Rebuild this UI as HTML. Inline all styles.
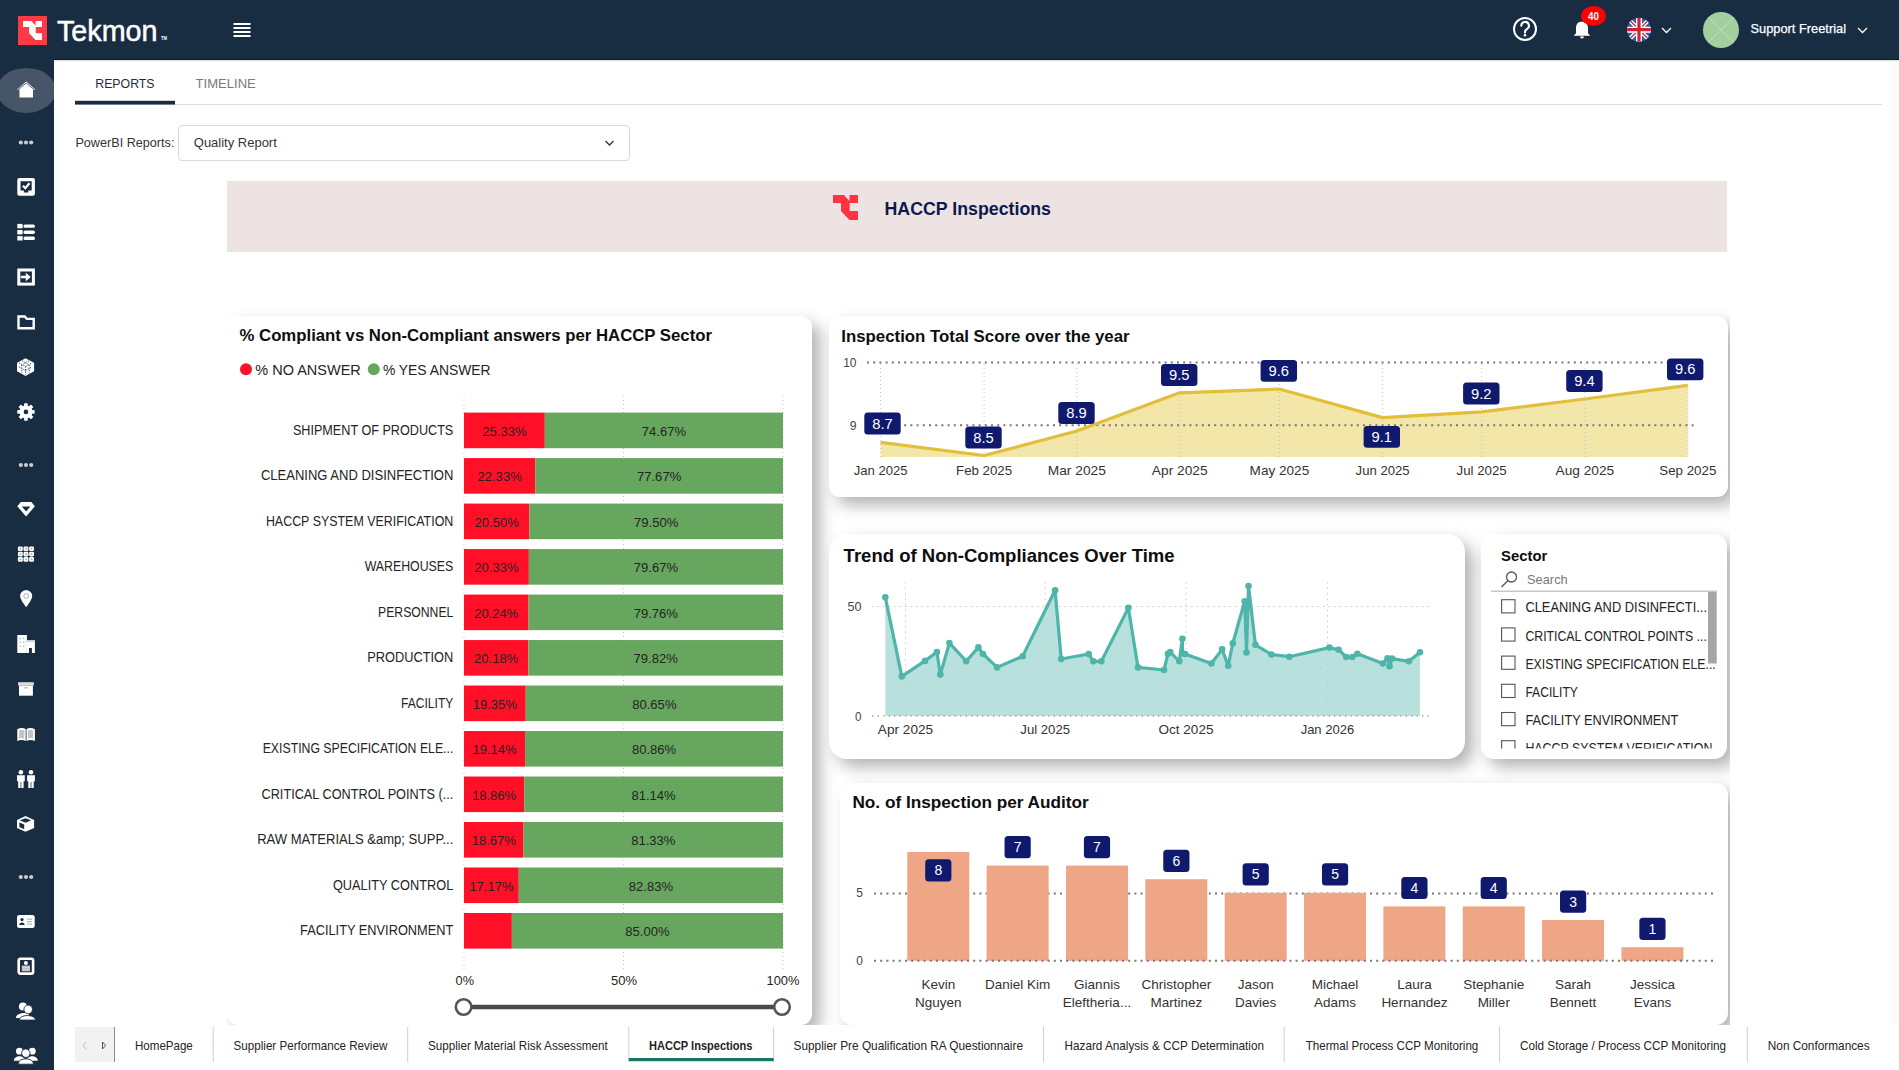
<!DOCTYPE html>
<html><head><meta charset="utf-8"><title>Tekmon - HACCP Inspections</title>
<style>
*{box-sizing:border-box}
html,body{margin:0;padding:0;width:1899px;height:1070px;overflow:hidden;background:#fff;font-family:"Liberation Sans",sans-serif}
.abs{position:absolute}
#header{position:absolute;left:0;top:0;width:1899px;height:60px;background:#182c42}
#sidebar{position:absolute;left:0;top:60px;width:54px;height:1010px;background:#182c42}
.card{position:absolute;background:#fff;border-radius:11px;box-shadow:8px 8px 16px rgba(0,0,0,0.3)}
svg text{font-family:"Liberation Sans",sans-serif}
</style></head><body>

<div id="header"></div><div id="sidebar"></div>
<div class="abs" style="left:54px;top:59px;width:1845px;height:1px;background:#0c1d2f"></div>
<div class="abs" style="left:54px;top:60px;width:1845px;height:2px;background:linear-gradient(#d8d8d8,#fff)"></div>
<div class="abs" style="left:1891px;top:62px;width:8px;height:1008px;background:#fbfbfb"></div>
<div class="abs" style="left:227px;top:181px;width:1500px;height:71px;background:#ede3e3"></div>
<div class="abs" style="left:178px;top:125px;width:452px;height:36px;border:1px solid #d9d9d9;border-radius:4px;background:#fff"></div>
<div class="card" style="left:227px;top:316px;width:585px;height:709px;border-radius:11px"></div>
<div class="card" style="left:829px;top:316px;width:899px;height:181px;border-radius:11px"></div>
<div class="card" style="left:829px;top:534px;width:636px;height:225px;border-radius:18px"></div>
<div class="card" style="left:1481px;top:534px;width:246px;height:225px;border-radius:13px"></div>
<div class="card" style="left:840px;top:783px;width:888px;height:242px;border-radius:12px"></div>
<div class="abs" style="left:54px;top:170px;width:173px;height:855px;background:#fff"></div>
<div class="abs" style="left:1730px;top:170px;width:161px;height:855px;background:#fff"></div>
<div class="abs" style="left:54px;top:1025px;width:1845px;height:45px;background:#fff"></div>
<svg class="abs" style="left:0;top:0" width="1899" height="1070" viewBox="0 0 1899 1070">
<rect x="18" y="16" width="29" height="29" fill="#ff3a47"/>
<path d="M0,0 H11 L16.5,6 V0 H25 V8 H16.7 V16 H25 V25 H16.5 L8,16 V8 H0 Z" fill="#fff" transform="translate(23,21) scale(0.76)"/>
<text x="57" y="40.5" font-size="29" font-weight="normal" fill="#fff" text-anchor="start" textLength="100.5" lengthAdjust="spacingAndGlyphs" stroke="#fff" stroke-width="0.5">Tekmon</text>
<text x="161" y="40" font-size="5" font-weight="bold" fill="#fff" text-anchor="start" textLength="6" lengthAdjust="spacingAndGlyphs" >TM</text>
<rect x="233.5" y="23" width="17" height="2" fill="#fff"/>
<rect x="233.5" y="27" width="17" height="2" fill="#fff"/>
<rect x="233.5" y="31" width="17" height="2" fill="#fff"/>
<rect x="233.5" y="35" width="17" height="2" fill="#fff"/>
<circle cx="1525" cy="29" r="11" fill="none" stroke="#fff" stroke-width="2"/>
<path d="M1521.3,25.8 a3.8,3.8 0 1 1 5.6,3.3 c-1.2,0.7 -1.9,1.4 -1.9,2.8 v0.6" fill="none" stroke="#fff" stroke-width="2.1" stroke-linecap="round"/>
<circle cx="1525" cy="35.2" r="1.3" fill="#fff"/>
<path d="M1582,21.5 c-3.8,0 -6,2.8 -6,6.5 v5.2 l-2.3,2.6 h16.6 l-2.3,-2.6 v-5.2 c0,-3.7 -2.2,-6.5 -6,-6.5z" fill="#fff"/>
<path d="M1580,36.5 a2,2 0 0 0 4,0z" fill="#fff"/>
<ellipse cx="1593.5" cy="16" rx="12.5" ry="10" fill="#f00"/>
<text x="1593.5" y="20" font-size="11" font-weight="bold" fill="#fff" text-anchor="middle" textLength="11" lengthAdjust="spacingAndGlyphs" >40</text>
<defs><clipPath id="flagc"><circle cx="1639" cy="29.7" r="12"/></clipPath></defs>
<g clip-path="url(#flagc)"><rect x="1627" y="17.7" width="24" height="24" fill="#2c5fb4"/><path d="M1627,17.7 L1651,41.7 M1651,17.7 L1627,41.7" stroke="#fff" stroke-width="4"/><path d="M1627,17.7 L1651,41.7 M1651,17.7 L1627,41.7" stroke="#d4202f" stroke-width="1.3"/><path d="M1639,17.7 V41.7 M1627,29.7 H1651" stroke="#fff" stroke-width="6"/><path d="M1639,17.7 V41.7 M1627,29.7 H1651" stroke="#d4202f" stroke-width="3.2"/></g>
<path d="M1662,28 l4.5,4.5 l4.5,-4.5" fill="none" stroke="#fff" stroke-width="1.3"/>
<circle cx="1721" cy="30" r="18" fill="#a2cf9e"/>
<path d="M1708.3,17.3 L1733.7,42.7 M1733.7,17.3 L1708.3,42.7" stroke="#c8e3c5" stroke-width="0.8"/>
<text x="1750.5" y="33" font-size="13" font-weight="normal" fill="#fff" text-anchor="start" textLength="95.5" lengthAdjust="spacingAndGlyphs" stroke="#fff" stroke-width="0.25">Support Freetrial</text>
<path d="M1858,28 l4.5,4.5 l4.5,-4.5" fill="none" stroke="#fff" stroke-width="1.3"/>
<defs><clipPath id="sbc"><rect x="0" y="60" width="54" height="1010"/></clipPath></defs><ellipse cx="26.3" cy="90.4" rx="29.5" ry="22.5" fill="#465567" clip-path="url(#sbc)"/>
<g transform="translate(17,81.5)"><path d="M9.25,0 L18.5,8.2 H16 V15.9 H2.5 V8.2 H0 Z" fill="#fff"/><path d="M1.2,8.3 L9.25,1.6 L17.3,8.3" fill="none" stroke="#465567" stroke-width="0.9"/></g>
<circle cx="20.8" cy="142.5" r="2.1" fill="#c5ccd4"/><circle cx="26" cy="142.5" r="2.1" fill="#c5ccd4"/><circle cx="31.2" cy="142.5" r="2.1" fill="#c5ccd4"/>
<g transform="translate(17.3,178.1)"><rect x="0" y="0" width="17.6" height="17.7" rx="2" fill="#fff"/><path d="M3.2,3.2 H14.4 V12.3 H11 V14.5 H6.6 V12.3 H3.2 Z" fill="#182c42"/><path d="M5.6,7.6 L8,10 L12.2,5.2" fill="none" stroke="#fff" stroke-width="2.2"/></g>
<g transform="translate(17.3,223.9)"><rect x="0" y="0" width="5.3" height="4.4" fill="#fff"/><rect x="6.2" y="0.5" width="11.4" height="3.4" rx="1.6" fill="#fff"/><rect x="0" y="6.1" width="5.3" height="4.4" fill="#fff"/><rect x="6.2" y="6.6" width="11.4" height="3.4" rx="1.6" fill="#fff"/><rect x="0" y="12.2" width="5.3" height="4.4" fill="#fff"/><rect x="6.2" y="12.7" width="11.4" height="3.4" rx="1.6" fill="#fff"/></g>
<g transform="translate(17.3,268.5)"><rect x="1.5" y="1.5" width="14.6" height="14.1" fill="none" stroke="#fff" stroke-width="3"/><path d="M3.5,7.3 H8.5 V4.3 L13.5,8.55 L8.5,12.8 V9.8 H3.5 Z" fill="#fff"/></g>
<g transform="translate(17.3,315.3)"><path d="M1.2,1.2 H7.5 L9.5,3.6 H16.4 V13 H1.2 Z" fill="none" stroke="#fff" stroke-width="2.4" stroke-linejoin="miter"/></g>
<g transform="translate(17,358.3)"><path d="M8.55,0 L16.6,4.3 Q17.1,4.6 17.1,5.2 V12.4 Q17.1,13 16.6,13.3 L8.55,17.6 L0.5,13.3 Q0,13 0,12.4 V5.2 Q0,4.6 0.5,4.3 Z" fill="#fff"/><g fill="none" stroke="#182c42" stroke-width="0.9" stroke-dasharray="1.2,1.3"><path d="M2,4.6 L8.55,8.2 L15.1,4.6 M8.55,8.2 V16 M5.2,2.5 L11.8,6.3 M11.9,2.5 L5.3,6.3 M2,8.6 L8.55,12.2 L15.1,8.6 M4.8,6.6 V14.5 M12.3,6.6 V14.5"/></g></g>
<g transform="translate(17,403.2)"><polygon points="15.06,6.81 17.69,7.02 17.69,10.38 15.06,10.59 14.61,11.69 16.32,13.69 13.94,16.07 11.94,14.36 10.84,14.81 10.63,17.44 7.27,17.44 7.06,14.81 5.96,14.36 3.96,16.07 1.58,13.69 3.29,11.69 2.84,10.59 0.21,10.38 0.21,7.02 2.84,6.81 3.29,5.71 1.58,3.71 3.96,1.33 5.96,3.04 7.06,2.59 7.27,-0.04 10.63,-0.04 10.84,2.59 11.94,3.04 13.94,1.33 16.32,3.71 14.61,5.71" fill="#fff"/><circle cx="8.95" cy="8.7" r="6.3" fill="#fff"/><circle cx="8.95" cy="8.7" r="2.3" fill="#182c42"/></g>
<circle cx="20.8" cy="465" r="2.1" fill="#c5ccd4"/><circle cx="26" cy="465" r="2.1" fill="#c5ccd4"/><circle cx="31.2" cy="465" r="2.1" fill="#c5ccd4"/>
<g transform="translate(17.3,502)"><path d="M3.6,0 H14 L17.6,4.3 L8.8,14.5 L0,4.3 Z" fill="#fff"/><path d="M4.6,4.6 H13 L8.8,9.6 Z" fill="#182c42"/></g>
<g transform="translate(17.9,546.4)"><rect x="0" y="0" width="4.9" height="4.7" rx="1.3" fill="#fff"/><rect x="1.6" y="1.5" width="1.7" height="1.7" fill="#9fb0b5"/><rect x="0" y="5.3" width="4.9" height="4.7" rx="1.3" fill="#fff"/><rect x="1.6" y="6.8" width="1.7" height="1.7" fill="#9fb0b5"/><rect x="0" y="10.6" width="4.9" height="4.7" rx="1.3" fill="#fff"/><rect x="1.6" y="12.1" width="1.7" height="1.7" fill="#9fb0b5"/><rect x="5.6" y="0" width="4.9" height="4.7" rx="1.3" fill="#fff"/><rect x="7.199999999999999" y="1.5" width="1.7" height="1.7" fill="#9fb0b5"/><rect x="5.6" y="5.3" width="4.9" height="4.7" rx="1.3" fill="#fff"/><rect x="7.199999999999999" y="6.8" width="1.7" height="1.7" fill="#9fb0b5"/><rect x="5.6" y="10.6" width="4.9" height="4.7" rx="1.3" fill="#fff"/><rect x="7.199999999999999" y="12.1" width="1.7" height="1.7" fill="#9fb0b5"/><rect x="11.2" y="0" width="4.9" height="4.7" rx="1.3" fill="#fff"/><rect x="12.799999999999999" y="1.5" width="1.7" height="1.7" fill="#9fb0b5"/><rect x="11.2" y="5.3" width="4.9" height="4.7" rx="1.3" fill="#fff"/><rect x="12.799999999999999" y="6.8" width="1.7" height="1.7" fill="#9fb0b5"/><rect x="11.2" y="10.6" width="4.9" height="4.7" rx="1.3" fill="#fff"/><rect x="12.799999999999999" y="12.1" width="1.7" height="1.7" fill="#9fb0b5"/></g>
<g transform="translate(20.1,590.2)"><path d="M6.05,0 C2.6,0 0,2.6 0,5.9 C0,9.6 6.05,17 6.05,17 C6.05,17 12.1,9.6 12.1,5.9 C12.1,2.6 9.5,0 6.05,0z" fill="#fff"/><circle cx="6.05" cy="5.8" r="2.4" fill="none" stroke="#9aa6b0" stroke-width="0.9"/></g>
<g transform="translate(17.3,635)"><rect x="0" y="0" width="9.6" height="18" fill="#fff"/><rect x="9.5" y="5.1" width="8.1" height="12.9" fill="#fff"/><rect x="9.5" y="5.1" width="8.1" height="1.8" fill="#c9c9c9"/><rect x="11.7" y="13" width="2.9" height="5" fill="#182c42"/><g fill="#9fc3c6"><rect x="2.2" y="2.7" width="1.3" height="1.5"/><rect x="5.8" y="2.7" width="1.3" height="1.5"/><rect x="2.2" y="6.6" width="1.3" height="1.5"/><rect x="5.8" y="6.6" width="1.3" height="1.5"/><rect x="2.2" y="10.5" width="1.3" height="1.5"/><rect x="5.8" y="10.5" width="1.3" height="1.5"/></g></g>
<g transform="translate(18.1,682.2)"><rect x="0" y="0" width="15.7" height="3.4" fill="#dedede"/><rect x="0.9" y="3.4" width="13.9" height="10.1" fill="#fff"/><rect x="6.3" y="5.2" width="3.2" height="0.9" fill="#8a8a8a"/></g>
<g transform="translate(17.3,727.6)"><path d="M0,1.6 Q4.4,-0.6 8.4,1.4 V13.4 Q4.4,11.6 0,13.4 Z M9.2,1.4 Q13.2,-0.6 17.6,1.6 V13.4 Q13.2,11.6 9.2,13.4 Z" fill="#fff"/><path d="M1.8,2.8 Q4.4,1.6 7,2.8 V11 Q4.4,10 1.8,11 Z M10.6,2.8 Q13.2,1.6 15.8,2.8 V11 Q13.2,10 10.6,11 Z" fill="#c4c4c4"/></g>
<g transform="translate(17,770)"><circle cx="3.9" cy="2.3" r="2.3" fill="#fff"/><path d="M0,5.2 H7.8 V11.2 H6.6 V18 H1.2 V11.2 H0 Z" fill="#fff"/><path d="M3.9,12 V18" stroke="#182c42" stroke-width="0.7"/><circle cx="14.0" cy="2.3" r="2.3" fill="#fff"/><path d="M10.1,5.2 H17.9 V11.2 H16.7 V18 H11.299999999999999 V11.2 H10.1 Z" fill="#fff"/><path d="M14.0,12 V18" stroke="#182c42" stroke-width="0.7"/></g>
<g transform="translate(17,816)"><path d="M8.55,0 L17.1,3.9 V11.9 L8.55,15.8 L0,11.9 V3.9 Z" fill="#fff"/><path d="M8.55,2.3 L14.3,4.3 L8.55,6.7 L2.8,4.3 Z" fill="#182c42"/><path d="M2.4,6.5 L7.2,8.6 V13.3 L2.4,11.1 Z" fill="#182c42"/></g>
<circle cx="20.8" cy="877" r="2.1" fill="#c5ccd4"/><circle cx="26" cy="877" r="2.1" fill="#c5ccd4"/><circle cx="31.2" cy="877" r="2.1" fill="#c5ccd4"/>
<g transform="translate(17,915)"><rect x="0" y="0" width="17.7" height="12.9" rx="2.2" fill="#fff"/><circle cx="5" cy="4.6" r="1.6" fill="#182c42"/><path d="M2.3,10 C2.3,6.6 7.7,6.6 7.7,10Z" fill="#182c42"/><path d="M10,4.2 H15 M10,6.6 H15 M10,9 H15" stroke="#9aa4ae" stroke-width="0.9"/></g>
<g transform="translate(17.4,957.5)"><rect x="1.3" y="1.3" width="14.4" height="14.8" rx="1.6" fill="none" stroke="#fff" stroke-width="2.6"/><circle cx="8.5" cy="5.5" r="2" fill="#fff"/><rect x="4.4" y="8" width="8.2" height="5.8" fill="#bfbfbf"/><path d="M4.4,9.9 H12.6 M4.4,11.8 H12.6" stroke="#e0e0e0" stroke-width="0.6"/></g>
<g transform="translate(15.9,1002.4)"><circle cx="7" cy="4.2" r="4" fill="#fff"/><path d="M0,15.5 C0,10 12,9.5 13,12 V15.5Z" fill="#fff"/><circle cx="12.3" cy="7" r="4.3" fill="#fff" stroke="#182c42" stroke-width="0.9"/><path d="M3.3,17.7 C3.3,11.6 19.6,11.6 19.6,17.7Z" fill="#fff" stroke="#182c42" stroke-width="0.9"/></g>
<g transform="translate(13.9,1047.2)"><circle cx="5.5" cy="4" r="3.4" fill="#fff"/><circle cx="18.4" cy="4" r="3.4" fill="#fff"/><path d="M0,13.5 C0,7.5 11,7.5 11,13.5Z M12.9,13.5 C12.9,7.5 23.9,7.5 23.9,13.5Z" fill="#fff"/><circle cx="11.95" cy="6" r="4.2" fill="#fff" stroke="#182c42" stroke-width="0.9"/><path d="M4.2,17 C4.2,9.8 19.7,9.8 19.7,17Z" fill="#fff" stroke="#182c42" stroke-width="0.9"/></g>
<text x="95.3" y="87.8" font-size="13" font-weight="normal" fill="#1f2d3d" text-anchor="start" textLength="59.2" lengthAdjust="spacingAndGlyphs" >REPORTS</text>
<text x="195.6" y="87.8" font-size="13" font-weight="normal" fill="#7a7a7a" text-anchor="start" textLength="60.2" lengthAdjust="spacingAndGlyphs" >TIMELINE</text>
<rect x="175" y="104" width="1707" height="1" fill="#dedede"/>
<rect x="75" y="100.8" width="100" height="3.8" fill="#182c42"/>
<text x="75.4" y="146.9" font-size="13" font-weight="normal" fill="#333" text-anchor="start" textLength="99" lengthAdjust="spacingAndGlyphs" >PowerBI Reports:</text>
<text x="193.8" y="146.9" font-size="13" font-weight="normal" fill="#333" text-anchor="start" textLength="83" lengthAdjust="spacingAndGlyphs" >Quality Report</text>
<path d="M605.5,141 l4,4 l4,-4" fill="none" stroke="#333" stroke-width="1.3"/>
<path d="M0,0 H11 L16.5,6 V0 H25 V8 H16.7 V16 H25 V25 H16.5 L8,16 V8 H0 Z" fill="#ff3341" transform="translate(833,195)"/>
<text x="884.5" y="215" font-size="18" font-weight="bold" fill="#0c1a4e" text-anchor="start" textLength="166.5" lengthAdjust="spacingAndGlyphs" >HACCP Inspections</text>
<text x="239.5" y="341.2" font-size="17" font-weight="bold" fill="#0e0e0e" text-anchor="start" textLength="472.5" lengthAdjust="spacingAndGlyphs" >% Compliant vs Non-Compliant answers per HACCP Sector</text>
<circle cx="246" cy="369.2" r="6" fill="#ff1027"/>
<text x="255.3" y="375" font-size="15.5" font-weight="normal" fill="#252423" text-anchor="start" textLength="105.5" lengthAdjust="spacingAndGlyphs" >% NO ANSWER</text>
<circle cx="373.8" cy="369.2" r="6" fill="#66a65e"/>
<text x="382.9" y="375" font-size="15.5" font-weight="normal" fill="#252423" text-anchor="start" textLength="107.7" lengthAdjust="spacingAndGlyphs" >% YES ANSWER</text>
<line x1="464" y1="396" x2="464" y2="969" stroke="#c8c8c8" stroke-width="1" stroke-dasharray="1,3"/>
<line x1="623.5" y1="396" x2="623.5" y2="969" stroke="#c8c8c8" stroke-width="1" stroke-dasharray="1,3"/>
<line x1="783" y1="396" x2="783" y2="969" stroke="#c8c8c8" stroke-width="1" stroke-dasharray="1,3"/>
<rect x="464" y="412.60" width="80.80" height="35.6" fill="#ff1027"/>
<rect x="544.80" y="412.60" width="238.20" height="35.6" fill="#66a65e"/>
<text x="453.3" y="434.6" font-size="14" font-weight="normal" fill="#252423" text-anchor="end" textLength="160.4" lengthAdjust="spacingAndGlyphs" >SHIPMENT OF PRODUCTS</text>
<text x="504.4" y="435.6" font-size="13.2" font-weight="normal" fill="#252423" text-anchor="middle" textLength="44.3" lengthAdjust="spacingAndGlyphs" >25.33%</text>
<text x="663.9" y="435.6" font-size="13.2" font-weight="normal" fill="#252423" text-anchor="middle" textLength="44.3" lengthAdjust="spacingAndGlyphs" >74.67%</text>
<rect x="464" y="458.09" width="71.23" height="35.6" fill="#ff1027"/>
<rect x="535.23" y="458.09" width="247.77" height="35.6" fill="#66a65e"/>
<text x="453.3" y="480.09" font-size="14" font-weight="normal" fill="#252423" text-anchor="end" textLength="192.4" lengthAdjust="spacingAndGlyphs" >CLEANING AND DISINFECTION</text>
<text x="499.62" y="481.09" font-size="13.2" font-weight="normal" fill="#252423" text-anchor="middle" textLength="44.3" lengthAdjust="spacingAndGlyphs" >22.33%</text>
<text x="659.12" y="481.09" font-size="13.2" font-weight="normal" fill="#252423" text-anchor="middle" textLength="44.3" lengthAdjust="spacingAndGlyphs" >77.67%</text>
<rect x="464" y="503.58" width="65.39" height="35.6" fill="#ff1027"/>
<rect x="529.39" y="503.58" width="253.61" height="35.6" fill="#66a65e"/>
<text x="453.3" y="525.58" font-size="14" font-weight="normal" fill="#252423" text-anchor="end" textLength="187.4" lengthAdjust="spacingAndGlyphs" >HACCP SYSTEM VERIFICATION</text>
<text x="496.7" y="526.58" font-size="13.2" font-weight="normal" fill="#252423" text-anchor="middle" textLength="44.3" lengthAdjust="spacingAndGlyphs" >20.50%</text>
<text x="656.2" y="526.58" font-size="13.2" font-weight="normal" fill="#252423" text-anchor="middle" textLength="44.3" lengthAdjust="spacingAndGlyphs" >79.50%</text>
<rect x="464" y="549.07" width="64.85" height="35.6" fill="#ff1027"/>
<rect x="528.85" y="549.07" width="254.15" height="35.6" fill="#66a65e"/>
<text x="453.3" y="571.07" font-size="14" font-weight="normal" fill="#252423" text-anchor="end" textLength="88.6" lengthAdjust="spacingAndGlyphs" >WAREHOUSES</text>
<text x="496.43" y="572.07" font-size="13.2" font-weight="normal" fill="#252423" text-anchor="middle" textLength="44.3" lengthAdjust="spacingAndGlyphs" >20.33%</text>
<text x="655.93" y="572.07" font-size="13.2" font-weight="normal" fill="#252423" text-anchor="middle" textLength="44.3" lengthAdjust="spacingAndGlyphs" >79.67%</text>
<rect x="464" y="594.56" width="64.57" height="35.6" fill="#ff1027"/>
<rect x="528.57" y="594.56" width="254.43" height="35.6" fill="#66a65e"/>
<text x="453.3" y="616.56" font-size="14" font-weight="normal" fill="#252423" text-anchor="end" textLength="75.2" lengthAdjust="spacingAndGlyphs" >PERSONNEL</text>
<text x="496.28" y="617.56" font-size="13.2" font-weight="normal" fill="#252423" text-anchor="middle" textLength="44.3" lengthAdjust="spacingAndGlyphs" >20.24%</text>
<text x="655.78" y="617.56" font-size="13.2" font-weight="normal" fill="#252423" text-anchor="middle" textLength="44.3" lengthAdjust="spacingAndGlyphs" >79.76%</text>
<rect x="464" y="640.05" width="64.37" height="35.6" fill="#ff1027"/>
<rect x="528.37" y="640.05" width="254.63" height="35.6" fill="#66a65e"/>
<text x="453.3" y="662.05" font-size="14" font-weight="normal" fill="#252423" text-anchor="end" textLength="86" lengthAdjust="spacingAndGlyphs" >PRODUCTION</text>
<text x="496.19" y="663.05" font-size="13.2" font-weight="normal" fill="#252423" text-anchor="middle" textLength="44.3" lengthAdjust="spacingAndGlyphs" >20.18%</text>
<text x="655.69" y="663.05" font-size="13.2" font-weight="normal" fill="#252423" text-anchor="middle" textLength="44.3" lengthAdjust="spacingAndGlyphs" >79.82%</text>
<rect x="464" y="685.54" width="61.73" height="35.6" fill="#ff1027"/>
<rect x="525.73" y="685.54" width="257.27" height="35.6" fill="#66a65e"/>
<text x="453.3" y="707.54" font-size="14" font-weight="normal" fill="#252423" text-anchor="end" textLength="52.3" lengthAdjust="spacingAndGlyphs" >FACILITY</text>
<text x="494.86" y="708.54" font-size="13.2" font-weight="normal" fill="#252423" text-anchor="middle" textLength="44.3" lengthAdjust="spacingAndGlyphs" >19.35%</text>
<text x="654.36" y="708.54" font-size="13.2" font-weight="normal" fill="#252423" text-anchor="middle" textLength="44.3" lengthAdjust="spacingAndGlyphs" >80.65%</text>
<rect x="464" y="731.03" width="61.06" height="35.6" fill="#ff1027"/>
<rect x="525.06" y="731.03" width="257.94" height="35.6" fill="#66a65e"/>
<text x="453.3" y="753.03" font-size="14" font-weight="normal" fill="#252423" text-anchor="end" textLength="190.6" lengthAdjust="spacingAndGlyphs" >EXISTING SPECIFICATION ELE...</text>
<text x="494.53" y="754.03" font-size="13.2" font-weight="normal" fill="#252423" text-anchor="middle" textLength="44.3" lengthAdjust="spacingAndGlyphs" >19.14%</text>
<text x="654.03" y="754.03" font-size="13.2" font-weight="normal" fill="#252423" text-anchor="middle" textLength="44.3" lengthAdjust="spacingAndGlyphs" >80.86%</text>
<rect x="464" y="776.52" width="60.16" height="35.6" fill="#ff1027"/>
<rect x="524.16" y="776.52" width="258.84" height="35.6" fill="#66a65e"/>
<text x="453.3" y="798.52" font-size="14" font-weight="normal" fill="#252423" text-anchor="end" textLength="191.8" lengthAdjust="spacingAndGlyphs" >CRITICAL CONTROL POINTS (...</text>
<text x="494.08" y="799.52" font-size="13.2" font-weight="normal" fill="#252423" text-anchor="middle" textLength="44.3" lengthAdjust="spacingAndGlyphs" >18.86%</text>
<text x="653.58" y="799.52" font-size="13.2" font-weight="normal" fill="#252423" text-anchor="middle" textLength="44.3" lengthAdjust="spacingAndGlyphs" >81.14%</text>
<rect x="464" y="822.01" width="59.56" height="35.6" fill="#ff1027"/>
<rect x="523.56" y="822.01" width="259.44" height="35.6" fill="#66a65e"/>
<text x="453.3" y="844.01" font-size="14" font-weight="normal" fill="#252423" text-anchor="end" textLength="196.1" lengthAdjust="spacingAndGlyphs" >RAW MATERIALS &amp;amp; SUPP...</text>
<text x="493.78" y="845.01" font-size="13.2" font-weight="normal" fill="#252423" text-anchor="middle" textLength="44.3" lengthAdjust="spacingAndGlyphs" >18.67%</text>
<text x="653.28" y="845.01" font-size="13.2" font-weight="normal" fill="#252423" text-anchor="middle" textLength="44.3" lengthAdjust="spacingAndGlyphs" >81.33%</text>
<rect x="464" y="867.50" width="54.77" height="35.6" fill="#ff1027"/>
<rect x="518.77" y="867.50" width="264.23" height="35.6" fill="#66a65e"/>
<text x="453.3" y="889.5" font-size="14" font-weight="normal" fill="#252423" text-anchor="end" textLength="120.4" lengthAdjust="spacingAndGlyphs" >QUALITY CONTROL</text>
<text x="491.39" y="890.5" font-size="13.2" font-weight="normal" fill="#252423" text-anchor="middle" textLength="44.3" lengthAdjust="spacingAndGlyphs" >17.17%</text>
<text x="650.89" y="890.5" font-size="13.2" font-weight="normal" fill="#252423" text-anchor="middle" textLength="44.3" lengthAdjust="spacingAndGlyphs" >82.83%</text>
<rect x="464" y="912.99" width="47.85" height="35.6" fill="#ff1027"/>
<rect x="511.85" y="912.99" width="271.15" height="35.6" fill="#66a65e"/>
<text x="453.3" y="934.99" font-size="14" font-weight="normal" fill="#252423" text-anchor="end" textLength="153.2" lengthAdjust="spacingAndGlyphs" >FACILITY ENVIRONMENT</text>
<text x="647.42" y="935.99" font-size="13.2" font-weight="normal" fill="#252423" text-anchor="middle" textLength="44.3" lengthAdjust="spacingAndGlyphs" >85.00%</text>
<text x="464.8" y="985" font-size="13.5" font-weight="normal" fill="#252423" text-anchor="middle" textLength="18.4" lengthAdjust="spacingAndGlyphs" >0%</text>
<text x="624" y="985" font-size="13.5" font-weight="normal" fill="#252423" text-anchor="middle" textLength="26" lengthAdjust="spacingAndGlyphs" >50%</text>
<text x="783" y="985" font-size="13.5" font-weight="normal" fill="#252423" text-anchor="middle" textLength="32.8" lengthAdjust="spacingAndGlyphs" >100%</text>
<line x1="464" y1="1007" x2="782" y2="1007" stroke="#4a4a4a" stroke-width="4.5"/>
<circle cx="463.6" cy="1007" r="7.8" fill="#fff" stroke="#555" stroke-width="2.6"/>
<circle cx="782" cy="1007" r="7.8" fill="#fff" stroke="#555" stroke-width="2.6"/>
<text x="841.3" y="341.7" font-size="17" font-weight="bold" fill="#0e0e0e" text-anchor="start" textLength="288.3" lengthAdjust="spacingAndGlyphs" >Inspection Total Score over the year</text>
<text x="856.5" y="367.3" font-size="13.5" font-weight="normal" fill="#444" text-anchor="end" textLength="13.3" lengthAdjust="spacingAndGlyphs" >10</text>
<text x="856.5" y="430" font-size="13.5" font-weight="normal" fill="#444" text-anchor="end" textLength="6.8" lengthAdjust="spacingAndGlyphs" >9</text>
<polygon points="880.6,457 880.6,442.4 984.1,455.5 1076.8,431.0 1179.7,392.8 1279.4,389.0 1382.6,417.6 1481.6,411.9 1584.9,399.0 1687.8,385.4 1687.8,457" fill="#f3e6a9"/>
<line x1="880.6" y1="364" x2="880.6" y2="457" stroke="#c4c4c4" stroke-width="1" stroke-dasharray="1,3"/>
<line x1="984.1" y1="364" x2="984.1" y2="457" stroke="#c4c4c4" stroke-width="1" stroke-dasharray="1,3"/>
<line x1="1076.8" y1="364" x2="1076.8" y2="457" stroke="#c4c4c4" stroke-width="1" stroke-dasharray="1,3"/>
<line x1="1179.7" y1="364" x2="1179.7" y2="457" stroke="#c4c4c4" stroke-width="1" stroke-dasharray="1,3"/>
<line x1="1279.4" y1="364" x2="1279.4" y2="457" stroke="#c4c4c4" stroke-width="1" stroke-dasharray="1,3"/>
<line x1="1382.6" y1="364" x2="1382.6" y2="457" stroke="#c4c4c4" stroke-width="1" stroke-dasharray="1,3"/>
<line x1="1481.6" y1="364" x2="1481.6" y2="457" stroke="#c4c4c4" stroke-width="1" stroke-dasharray="1,3"/>
<line x1="1584.9" y1="364" x2="1584.9" y2="457" stroke="#c4c4c4" stroke-width="1" stroke-dasharray="1,3"/>
<line x1="1687.8" y1="364" x2="1687.8" y2="457" stroke="#c4c4c4" stroke-width="1" stroke-dasharray="1,3"/>
<line x1="867" y1="362.5" x2="1697" y2="362.5" stroke="#777" stroke-width="2" stroke-dasharray="2,4.2"/>
<line x1="867" y1="425.2" x2="1697" y2="425.2" stroke="#777" stroke-width="2" stroke-dasharray="2,4.2"/>
<polyline points="880.6,442.4 984.1,455.5 1076.8,431.0 1179.7,392.8 1279.4,389.0 1382.6,417.6 1481.6,411.9 1584.9,399.0 1687.8,385.4" fill="none" stroke="#e1bf3b" stroke-width="3.2" stroke-linejoin="round"/>
<text x="880.6" y="474.9" font-size="13.5" font-weight="normal" fill="#333" text-anchor="middle" textLength="53.8" lengthAdjust="spacingAndGlyphs" >Jan 2025</text>
<text x="984.1" y="474.9" font-size="13.5" font-weight="normal" fill="#333" text-anchor="middle" textLength="56" lengthAdjust="spacingAndGlyphs" >Feb 2025</text>
<text x="1076.8" y="474.9" font-size="13.5" font-weight="normal" fill="#333" text-anchor="middle" textLength="58" lengthAdjust="spacingAndGlyphs" >Mar 2025</text>
<text x="1179.7" y="474.9" font-size="13.5" font-weight="normal" fill="#333" text-anchor="middle" textLength="55.7" lengthAdjust="spacingAndGlyphs" >Apr 2025</text>
<text x="1279.4" y="474.9" font-size="13.5" font-weight="normal" fill="#333" text-anchor="middle" textLength="59.6" lengthAdjust="spacingAndGlyphs" >May 2025</text>
<text x="1382.6" y="474.9" font-size="13.5" font-weight="normal" fill="#333" text-anchor="middle" textLength="54" lengthAdjust="spacingAndGlyphs" >Jun 2025</text>
<text x="1481.6" y="474.9" font-size="13.5" font-weight="normal" fill="#333" text-anchor="middle" textLength="50" lengthAdjust="spacingAndGlyphs" >Jul 2025</text>
<text x="1584.9" y="474.9" font-size="13.5" font-weight="normal" fill="#333" text-anchor="middle" textLength="58.7" lengthAdjust="spacingAndGlyphs" >Aug 2025</text>
<text x="1687.8" y="474.9" font-size="13.5" font-weight="normal" fill="#333" text-anchor="middle" textLength="57" lengthAdjust="spacingAndGlyphs" >Sep 2025</text>
<rect x="864.3" y="412.6" width="36.4" height="21.8" rx="3.5" fill="#0f1a6e"/>
<text x="882.5" y="428.5" font-size="14" font-weight="normal" fill="#fff" text-anchor="middle" textLength="20.5" lengthAdjust="spacingAndGlyphs" >8.7</text>
<rect x="965.3" y="426.6" width="36.4" height="21.8" rx="3.5" fill="#0f1a6e"/>
<text x="983.5" y="442.5" font-size="14" font-weight="normal" fill="#fff" text-anchor="middle" textLength="20.5" lengthAdjust="spacingAndGlyphs" >8.5</text>
<rect x="1058.3" y="402.1" width="36.4" height="21.8" rx="3.5" fill="#0f1a6e"/>
<text x="1076.5" y="418" font-size="14" font-weight="normal" fill="#fff" text-anchor="middle" textLength="20.5" lengthAdjust="spacingAndGlyphs" >8.9</text>
<rect x="1161.0" y="364.1" width="36.4" height="21.8" rx="3.5" fill="#0f1a6e"/>
<text x="1179.2" y="380" font-size="14" font-weight="normal" fill="#fff" text-anchor="middle" textLength="20.5" lengthAdjust="spacingAndGlyphs" >9.5</text>
<rect x="1260.6" y="359.90000000000003" width="36.4" height="21.8" rx="3.5" fill="#0f1a6e"/>
<text x="1278.8" y="375.8" font-size="14" font-weight="normal" fill="#fff" text-anchor="middle" textLength="20.5" lengthAdjust="spacingAndGlyphs" >9.6</text>
<rect x="1363.6" y="425.90000000000003" width="36.4" height="21.8" rx="3.5" fill="#0f1a6e"/>
<text x="1381.8" y="441.8" font-size="14" font-weight="normal" fill="#fff" text-anchor="middle" textLength="20.5" lengthAdjust="spacingAndGlyphs" >9.1</text>
<rect x="1463.1" y="382.6" width="36.4" height="21.8" rx="3.5" fill="#0f1a6e"/>
<text x="1481.3" y="398.5" font-size="14" font-weight="normal" fill="#fff" text-anchor="middle" textLength="20.5" lengthAdjust="spacingAndGlyphs" >9.2</text>
<rect x="1566.2" y="370.1" width="36.4" height="21.8" rx="3.5" fill="#0f1a6e"/>
<text x="1584.4" y="386" font-size="14" font-weight="normal" fill="#fff" text-anchor="middle" textLength="20.5" lengthAdjust="spacingAndGlyphs" >9.4</text>
<rect x="1667.0" y="358.40000000000003" width="36.4" height="21.8" rx="3.5" fill="#0f1a6e"/>
<text x="1685.2" y="374.3" font-size="14" font-weight="normal" fill="#fff" text-anchor="middle" textLength="20.5" lengthAdjust="spacingAndGlyphs" >9.6</text>
<text x="843.6" y="562.4" font-size="18.5" font-weight="bold" fill="#0e0e0e" text-anchor="start" textLength="331" lengthAdjust="spacingAndGlyphs" >Trend of Non-Compliances Over Time</text>
<text x="861.5" y="611" font-size="13.5" font-weight="normal" fill="#444" text-anchor="end" textLength="14" lengthAdjust="spacingAndGlyphs" >50</text>
<text x="861.5" y="721" font-size="13.5" font-weight="normal" fill="#444" text-anchor="end" textLength="6.5" lengthAdjust="spacingAndGlyphs" >0</text>
<polygon points="885.3,716 885.3,597.2 901.8,676.4 925,660.9 936.9,652 940.3,674.6 949.4,643 966.2,661.2 978.4,647.4 983,654 997.1,667.4 1022.7,656.3 1055.1,590.3 1061.2,659 1088.7,654 1093.3,661.3 1101.4,661.3 1128.4,607.9 1138,667.4 1164,670 1168,653.7 1170.2,652 1179.3,661.3 1182.4,638.7 1182.4,653.2 1185.1,654 1211.4,663.5 1222.1,649.4 1228.2,665.8 1232.8,643.3 1244.7,601.3 1246.5,652.5 1248.5,586 1255.4,644.8 1271.4,654.5 1289.3,656.7 1329.4,647.6 1338.6,649.7 1346.2,657 1352.3,657 1357.4,653.7 1382.9,663.5 1387.5,658.3 1389.5,666.2 1392,658.6 1408.9,661.3 1420,652.2 1420,716" fill="#b8e1dd"/>
<line x1="872" y1="606.5" x2="1432" y2="606.5" stroke="#c8c8c8" stroke-width="1" stroke-dasharray="1.5,4"/>
<line x1="872" y1="716" x2="1432" y2="716" stroke="#aaa" stroke-width="1.5" stroke-dasharray="1.5,4"/>
<line x1="905.5" y1="582" x2="905.5" y2="716" stroke="#c8c8c8" stroke-width="1" stroke-dasharray="1.5,4"/>
<text x="905.5" y="734.3" font-size="13.5" font-weight="normal" fill="#333" text-anchor="middle" textLength="55.3" lengthAdjust="spacingAndGlyphs" >Apr 2025</text>
<line x1="1045.2" y1="582" x2="1045.2" y2="716" stroke="#c8c8c8" stroke-width="1" stroke-dasharray="1.5,4"/>
<text x="1045.2" y="734.3" font-size="13.5" font-weight="normal" fill="#333" text-anchor="middle" textLength="49.7" lengthAdjust="spacingAndGlyphs" >Jul 2025</text>
<line x1="1186" y1="582" x2="1186" y2="716" stroke="#c8c8c8" stroke-width="1" stroke-dasharray="1.5,4"/>
<text x="1186" y="734.3" font-size="13.5" font-weight="normal" fill="#333" text-anchor="middle" textLength="54.9" lengthAdjust="spacingAndGlyphs" >Oct 2025</text>
<line x1="1327.4" y1="582" x2="1327.4" y2="716" stroke="#c8c8c8" stroke-width="1" stroke-dasharray="1.5,4"/>
<text x="1327.4" y="734.3" font-size="13.5" font-weight="normal" fill="#333" text-anchor="middle" textLength="53.5" lengthAdjust="spacingAndGlyphs" >Jan 2026</text>
<polyline points="885.3,597.2 901.8,676.4 925,660.9 936.9,652 940.3,674.6 949.4,643 966.2,661.2 978.4,647.4 983,654 997.1,667.4 1022.7,656.3 1055.1,590.3 1061.2,659 1088.7,654 1093.3,661.3 1101.4,661.3 1128.4,607.9 1138,667.4 1164,670 1168,653.7 1170.2,652 1179.3,661.3 1182.4,638.7 1182.4,653.2 1185.1,654 1211.4,663.5 1222.1,649.4 1228.2,665.8 1232.8,643.3 1244.7,601.3 1246.5,652.5 1248.5,586 1255.4,644.8 1271.4,654.5 1289.3,656.7 1329.4,647.6 1338.6,649.7 1346.2,657 1352.3,657 1357.4,653.7 1382.9,663.5 1387.5,658.3 1389.5,666.2 1392,658.6 1408.9,661.3 1420,652.2" fill="none" stroke="#4db5aa" stroke-width="3.2" stroke-linejoin="round"/>
<circle cx="885.3" cy="597.2" r="3.3" fill="#4db5aa"/>
<circle cx="901.8" cy="676.4" r="3.3" fill="#4db5aa"/>
<circle cx="925" cy="660.9" r="3.3" fill="#4db5aa"/>
<circle cx="936.9" cy="652" r="3.3" fill="#4db5aa"/>
<circle cx="940.3" cy="674.6" r="3.3" fill="#4db5aa"/>
<circle cx="949.4" cy="643" r="3.3" fill="#4db5aa"/>
<circle cx="966.2" cy="661.2" r="3.3" fill="#4db5aa"/>
<circle cx="978.4" cy="647.4" r="3.3" fill="#4db5aa"/>
<circle cx="983" cy="654" r="3.3" fill="#4db5aa"/>
<circle cx="997.1" cy="667.4" r="3.3" fill="#4db5aa"/>
<circle cx="1022.7" cy="656.3" r="3.3" fill="#4db5aa"/>
<circle cx="1055.1" cy="590.3" r="3.3" fill="#4db5aa"/>
<circle cx="1061.2" cy="659" r="3.3" fill="#4db5aa"/>
<circle cx="1088.7" cy="654" r="3.3" fill="#4db5aa"/>
<circle cx="1093.3" cy="661.3" r="3.3" fill="#4db5aa"/>
<circle cx="1101.4" cy="661.3" r="3.3" fill="#4db5aa"/>
<circle cx="1128.4" cy="607.9" r="3.3" fill="#4db5aa"/>
<circle cx="1138" cy="667.4" r="3.3" fill="#4db5aa"/>
<circle cx="1164" cy="670" r="3.3" fill="#4db5aa"/>
<circle cx="1168" cy="653.7" r="3.3" fill="#4db5aa"/>
<circle cx="1170.2" cy="652" r="3.3" fill="#4db5aa"/>
<circle cx="1179.3" cy="661.3" r="3.3" fill="#4db5aa"/>
<circle cx="1182.4" cy="638.7" r="3.3" fill="#4db5aa"/>
<circle cx="1182.4" cy="653.2" r="3.3" fill="#4db5aa"/>
<circle cx="1185.1" cy="654" r="3.3" fill="#4db5aa"/>
<circle cx="1211.4" cy="663.5" r="3.3" fill="#4db5aa"/>
<circle cx="1222.1" cy="649.4" r="3.3" fill="#4db5aa"/>
<circle cx="1228.2" cy="665.8" r="3.3" fill="#4db5aa"/>
<circle cx="1232.8" cy="643.3" r="3.3" fill="#4db5aa"/>
<circle cx="1244.7" cy="601.3" r="3.3" fill="#4db5aa"/>
<circle cx="1246.5" cy="652.5" r="3.3" fill="#4db5aa"/>
<circle cx="1248.5" cy="586" r="3.3" fill="#4db5aa"/>
<circle cx="1255.4" cy="644.8" r="3.3" fill="#4db5aa"/>
<circle cx="1271.4" cy="654.5" r="3.3" fill="#4db5aa"/>
<circle cx="1289.3" cy="656.7" r="3.3" fill="#4db5aa"/>
<circle cx="1329.4" cy="647.6" r="3.3" fill="#4db5aa"/>
<circle cx="1338.6" cy="649.7" r="3.3" fill="#4db5aa"/>
<circle cx="1346.2" cy="657" r="3.3" fill="#4db5aa"/>
<circle cx="1352.3" cy="657" r="3.3" fill="#4db5aa"/>
<circle cx="1357.4" cy="653.7" r="3.3" fill="#4db5aa"/>
<circle cx="1382.9" cy="663.5" r="3.3" fill="#4db5aa"/>
<circle cx="1387.5" cy="658.3" r="3.3" fill="#4db5aa"/>
<circle cx="1389.5" cy="666.2" r="3.3" fill="#4db5aa"/>
<circle cx="1392" cy="658.6" r="3.3" fill="#4db5aa"/>
<circle cx="1408.9" cy="661.3" r="3.3" fill="#4db5aa"/>
<circle cx="1420" cy="652.2" r="3.3" fill="#4db5aa"/>
<text x="1501.1" y="560.8" font-size="15" font-weight="bold" fill="#0e0e0e" text-anchor="start" textLength="46.2" lengthAdjust="spacingAndGlyphs" >Sector</text>
<circle cx="1511.5" cy="577" r="5" fill="none" stroke="#555" stroke-width="1.3"/><line x1="1507.8" y1="580.8" x2="1501.5" y2="587" stroke="#555" stroke-width="1.4"/>
<text x="1527" y="584.3" font-size="13.5" font-weight="normal" fill="#777" text-anchor="start" textLength="40.7" lengthAdjust="spacingAndGlyphs" >Search</text>
<line x1="1491" y1="591.2" x2="1717" y2="591.2" stroke="#c8c8c8" stroke-width="1.5"/>

<defs><clipPath id="slc"><rect x="1485" y="592" width="240" height="156.5"/></clipPath></defs><g clip-path="url(#slc)">
<rect x="1501.6" y="599.7" width="13.4" height="13.2" fill="#fff" stroke="#555" stroke-width="1.1"/>
<text x="1525.4" y="612.3" font-size="14" font-weight="normal" fill="#252423" text-anchor="start" textLength="181.6" lengthAdjust="spacingAndGlyphs" >CLEANING AND DISINFECTI...</text>
<rect x="1501.6" y="627.9" width="13.4" height="13.2" fill="#fff" stroke="#555" stroke-width="1.1"/>
<text x="1525.4" y="640.5" font-size="14" font-weight="normal" fill="#252423" text-anchor="start" textLength="181.5" lengthAdjust="spacingAndGlyphs" >CRITICAL CONTROL POINTS ...</text>
<rect x="1501.6" y="656.1" width="13.4" height="13.2" fill="#fff" stroke="#555" stroke-width="1.1"/>
<text x="1525.4" y="668.7" font-size="14" font-weight="normal" fill="#252423" text-anchor="start" textLength="190.3" lengthAdjust="spacingAndGlyphs" >EXISTING SPECIFICATION ELE...</text>
<rect x="1501.6" y="684.3" width="13.4" height="13.2" fill="#fff" stroke="#555" stroke-width="1.1"/>
<text x="1525.4" y="696.9" font-size="14" font-weight="normal" fill="#252423" text-anchor="start" textLength="52.5" lengthAdjust="spacingAndGlyphs" >FACILITY</text>
<rect x="1501.6" y="712.5" width="13.4" height="13.2" fill="#fff" stroke="#555" stroke-width="1.1"/>
<text x="1525.4" y="725.1" font-size="14" font-weight="normal" fill="#252423" text-anchor="start" textLength="153" lengthAdjust="spacingAndGlyphs" >FACILITY ENVIRONMENT</text>
<rect x="1501.6" y="740.7" width="13.4" height="13.2" fill="#fff" stroke="#555" stroke-width="1.1"/>
<text x="1525.4" y="753.3" font-size="14" font-weight="normal" fill="#252423" text-anchor="start" textLength="187" lengthAdjust="spacingAndGlyphs" >HACCP SYSTEM VERIFICATION</text>
</g>
<rect x="1708" y="592" width="8.7" height="71.5" fill="#a6a6a6"/>
<text x="852.4" y="808.4" font-size="17" font-weight="bold" fill="#0e0e0e" text-anchor="start" textLength="236.4" lengthAdjust="spacingAndGlyphs" >No. of Inspection per Auditor</text>
<text x="862.8" y="897.2" font-size="13.5" font-weight="normal" fill="#444" text-anchor="end" textLength="6.6" lengthAdjust="spacingAndGlyphs" >5</text>
<text x="862.8" y="964.8" font-size="13.5" font-weight="normal" fill="#444" text-anchor="end" textLength="6.6" lengthAdjust="spacingAndGlyphs" >0</text>
<line x1="874" y1="893.5" x2="1716" y2="893.5" stroke="#777" stroke-width="2" stroke-dasharray="2,4.2"/>
<rect x="907.30" y="852.00" width="62" height="108.80" fill="#efa686"/><rect x="986.65" y="865.60" width="62" height="95.20" fill="#efa686"/><rect x="1066.00" y="865.60" width="62" height="95.20" fill="#efa686"/><rect x="1145.35" y="879.20" width="62" height="81.60" fill="#efa686"/><rect x="1224.70" y="892.80" width="62" height="68.00" fill="#efa686"/><rect x="1304.05" y="892.80" width="62" height="68.00" fill="#efa686"/><rect x="1383.40" y="906.40" width="62" height="54.40" fill="#efa686"/><rect x="1462.75" y="906.40" width="62" height="54.40" fill="#efa686"/><rect x="1542.10" y="920.00" width="62" height="40.80" fill="#efa686"/><rect x="1621.45" y="947.20" width="62" height="13.60" fill="#efa686"/>
<line x1="874" y1="960.8" x2="1716" y2="960.8" stroke="#777" stroke-width="2" stroke-dasharray="2,4.2"/>
<rect x="925.20" y="859.20" width="26.2" height="22.2" rx="3.5" fill="#0f1a6e"/>
<text x="938.3" y="875.2" font-size="14" font-weight="normal" fill="#fff" text-anchor="middle" textLength="7.8" lengthAdjust="spacingAndGlyphs" >8</text>
<text x="938.3" y="989.2" font-size="13.5" font-weight="normal" fill="#333" text-anchor="middle" >Kevin</text>
<text x="938.3" y="1007" font-size="13.5" font-weight="normal" fill="#333" text-anchor="middle" >Nguyen</text>
<rect x="1004.55" y="836.10" width="26.2" height="22.2" rx="3.5" fill="#0f1a6e"/>
<text x="1017.65" y="852.1" font-size="14" font-weight="normal" fill="#fff" text-anchor="middle" textLength="7.8" lengthAdjust="spacingAndGlyphs" >7</text>
<text x="1017.65" y="989.2" font-size="13.5" font-weight="normal" fill="#333" text-anchor="middle" >Daniel Kim</text>
<rect x="1083.90" y="836.10" width="26.2" height="22.2" rx="3.5" fill="#0f1a6e"/>
<text x="1097.0" y="852.1" font-size="14" font-weight="normal" fill="#fff" text-anchor="middle" textLength="7.8" lengthAdjust="spacingAndGlyphs" >7</text>
<text x="1097.0" y="989.2" font-size="13.5" font-weight="normal" fill="#333" text-anchor="middle" >Giannis</text>
<text x="1097.0" y="1007" font-size="13.5" font-weight="normal" fill="#333" text-anchor="middle" >Eleftheria...</text>
<rect x="1163.25" y="849.70" width="26.2" height="22.2" rx="3.5" fill="#0f1a6e"/>
<text x="1176.35" y="865.7" font-size="14" font-weight="normal" fill="#fff" text-anchor="middle" textLength="7.8" lengthAdjust="spacingAndGlyphs" >6</text>
<text x="1176.35" y="989.2" font-size="13.5" font-weight="normal" fill="#333" text-anchor="middle" >Christopher</text>
<text x="1176.35" y="1007" font-size="13.5" font-weight="normal" fill="#333" text-anchor="middle" >Martinez</text>
<rect x="1242.60" y="863.30" width="26.2" height="22.2" rx="3.5" fill="#0f1a6e"/>
<text x="1255.7" y="879.3" font-size="14" font-weight="normal" fill="#fff" text-anchor="middle" textLength="7.8" lengthAdjust="spacingAndGlyphs" >5</text>
<text x="1255.7" y="989.2" font-size="13.5" font-weight="normal" fill="#333" text-anchor="middle" >Jason</text>
<text x="1255.7" y="1007" font-size="13.5" font-weight="normal" fill="#333" text-anchor="middle" >Davies</text>
<rect x="1321.95" y="863.30" width="26.2" height="22.2" rx="3.5" fill="#0f1a6e"/>
<text x="1335.05" y="879.3" font-size="14" font-weight="normal" fill="#fff" text-anchor="middle" textLength="7.8" lengthAdjust="spacingAndGlyphs" >5</text>
<text x="1335.05" y="989.2" font-size="13.5" font-weight="normal" fill="#333" text-anchor="middle" >Michael</text>
<text x="1335.05" y="1007" font-size="13.5" font-weight="normal" fill="#333" text-anchor="middle" >Adams</text>
<rect x="1401.30" y="876.90" width="26.2" height="22.2" rx="3.5" fill="#0f1a6e"/>
<text x="1414.4" y="892.9" font-size="14" font-weight="normal" fill="#fff" text-anchor="middle" textLength="7.8" lengthAdjust="spacingAndGlyphs" >4</text>
<text x="1414.4" y="989.2" font-size="13.5" font-weight="normal" fill="#333" text-anchor="middle" >Laura</text>
<text x="1414.4" y="1007" font-size="13.5" font-weight="normal" fill="#333" text-anchor="middle" >Hernandez</text>
<rect x="1480.65" y="876.90" width="26.2" height="22.2" rx="3.5" fill="#0f1a6e"/>
<text x="1493.75" y="892.9" font-size="14" font-weight="normal" fill="#fff" text-anchor="middle" textLength="7.8" lengthAdjust="spacingAndGlyphs" >4</text>
<text x="1493.75" y="989.2" font-size="13.5" font-weight="normal" fill="#333" text-anchor="middle" >Stephanie</text>
<text x="1493.75" y="1007" font-size="13.5" font-weight="normal" fill="#333" text-anchor="middle" >Miller</text>
<rect x="1560.00" y="890.50" width="26.2" height="22.2" rx="3.5" fill="#0f1a6e"/>
<text x="1573.1" y="906.5" font-size="14" font-weight="normal" fill="#fff" text-anchor="middle" textLength="7.8" lengthAdjust="spacingAndGlyphs" >3</text>
<text x="1573.1" y="989.2" font-size="13.5" font-weight="normal" fill="#333" text-anchor="middle" >Sarah</text>
<text x="1573.1" y="1007" font-size="13.5" font-weight="normal" fill="#333" text-anchor="middle" >Bennett</text>
<rect x="1639.35" y="917.70" width="26.2" height="22.2" rx="3.5" fill="#0f1a6e"/>
<text x="1652.45" y="933.7" font-size="14" font-weight="normal" fill="#fff" text-anchor="middle" textLength="7.8" lengthAdjust="spacingAndGlyphs" >1</text>
<text x="1652.45" y="989.2" font-size="13.5" font-weight="normal" fill="#333" text-anchor="middle" >Jessica</text>
<text x="1652.45" y="1007" font-size="13.5" font-weight="normal" fill="#333" text-anchor="middle" >Evans</text>
<rect x="75" y="1027" width="39.5" height="35" fill="#f2f2f2"/>
<line x1="114.5" y1="1027" x2="114.5" y2="1062" stroke="#8a8a8a" stroke-width="1"/>
<path d="M86,1042 l-3,3.5 l3,3.5" fill="none" stroke="#bbb" stroke-width="1"/>
<path d="M102.5,1042 l3.2,3.5 l-3.2,3.5z" fill="none" stroke="#555" stroke-width="1"/>
<line x1="213.2" y1="1027" x2="213.2" y2="1062" stroke="#cfcfcf" stroke-width="1"/>
<line x1="407.7" y1="1027" x2="407.7" y2="1062" stroke="#cfcfcf" stroke-width="1"/>
<line x1="628.8" y1="1027" x2="628.8" y2="1062" stroke="#cfcfcf" stroke-width="1"/>
<line x1="773.6" y1="1027" x2="773.6" y2="1062" stroke="#cfcfcf" stroke-width="1"/>
<line x1="1043.5" y1="1027" x2="1043.5" y2="1062" stroke="#cfcfcf" stroke-width="1"/>
<line x1="1284.2" y1="1027" x2="1284.2" y2="1062" stroke="#cfcfcf" stroke-width="1"/>
<line x1="1499.5" y1="1027" x2="1499.5" y2="1062" stroke="#cfcfcf" stroke-width="1"/>
<line x1="1747.3" y1="1027" x2="1747.3" y2="1062" stroke="#cfcfcf" stroke-width="1"/>
<text x="135" y="1050" font-size="13" font-weight="normal" fill="#252423" text-anchor="start" textLength="57.8" lengthAdjust="spacingAndGlyphs" >HomePage</text>
<text x="233.6" y="1050" font-size="13" font-weight="normal" fill="#252423" text-anchor="start" textLength="153.7" lengthAdjust="spacingAndGlyphs" >Supplier Performance Review</text>
<text x="428" y="1050" font-size="13" font-weight="normal" fill="#252423" text-anchor="start" textLength="179.7" lengthAdjust="spacingAndGlyphs" >Supplier Material Risk Assessment</text>
<text x="649" y="1050" font-size="13" font-weight="bold" fill="#252423" text-anchor="start" textLength="103.4" lengthAdjust="spacingAndGlyphs" >HACCP Inspections</text>
<text x="793.5" y="1050" font-size="13" font-weight="normal" fill="#252423" text-anchor="start" textLength="229.5" lengthAdjust="spacingAndGlyphs" >Supplier Pre Qualification RA Questionnaire</text>
<text x="1064.5" y="1050" font-size="13" font-weight="normal" fill="#252423" text-anchor="start" textLength="199.5" lengthAdjust="spacingAndGlyphs" >Hazard Analysis &amp; CCP Determination</text>
<text x="1305.7" y="1050" font-size="13" font-weight="normal" fill="#252423" text-anchor="start" textLength="172.6" lengthAdjust="spacingAndGlyphs" >Thermal Process CCP Monitoring</text>
<text x="1520" y="1050" font-size="13" font-weight="normal" fill="#252423" text-anchor="start" textLength="206" lengthAdjust="spacingAndGlyphs" >Cold Storage / Process CCP Monitoring</text>
<text x="1767.8" y="1050" font-size="13" font-weight="normal" fill="#252423" text-anchor="start" textLength="101.8" lengthAdjust="spacingAndGlyphs" >Non Conformances</text>
<rect x="628.8" y="1058" width="144.8" height="3.2" fill="#117865"/>
</svg>
</body></html>
